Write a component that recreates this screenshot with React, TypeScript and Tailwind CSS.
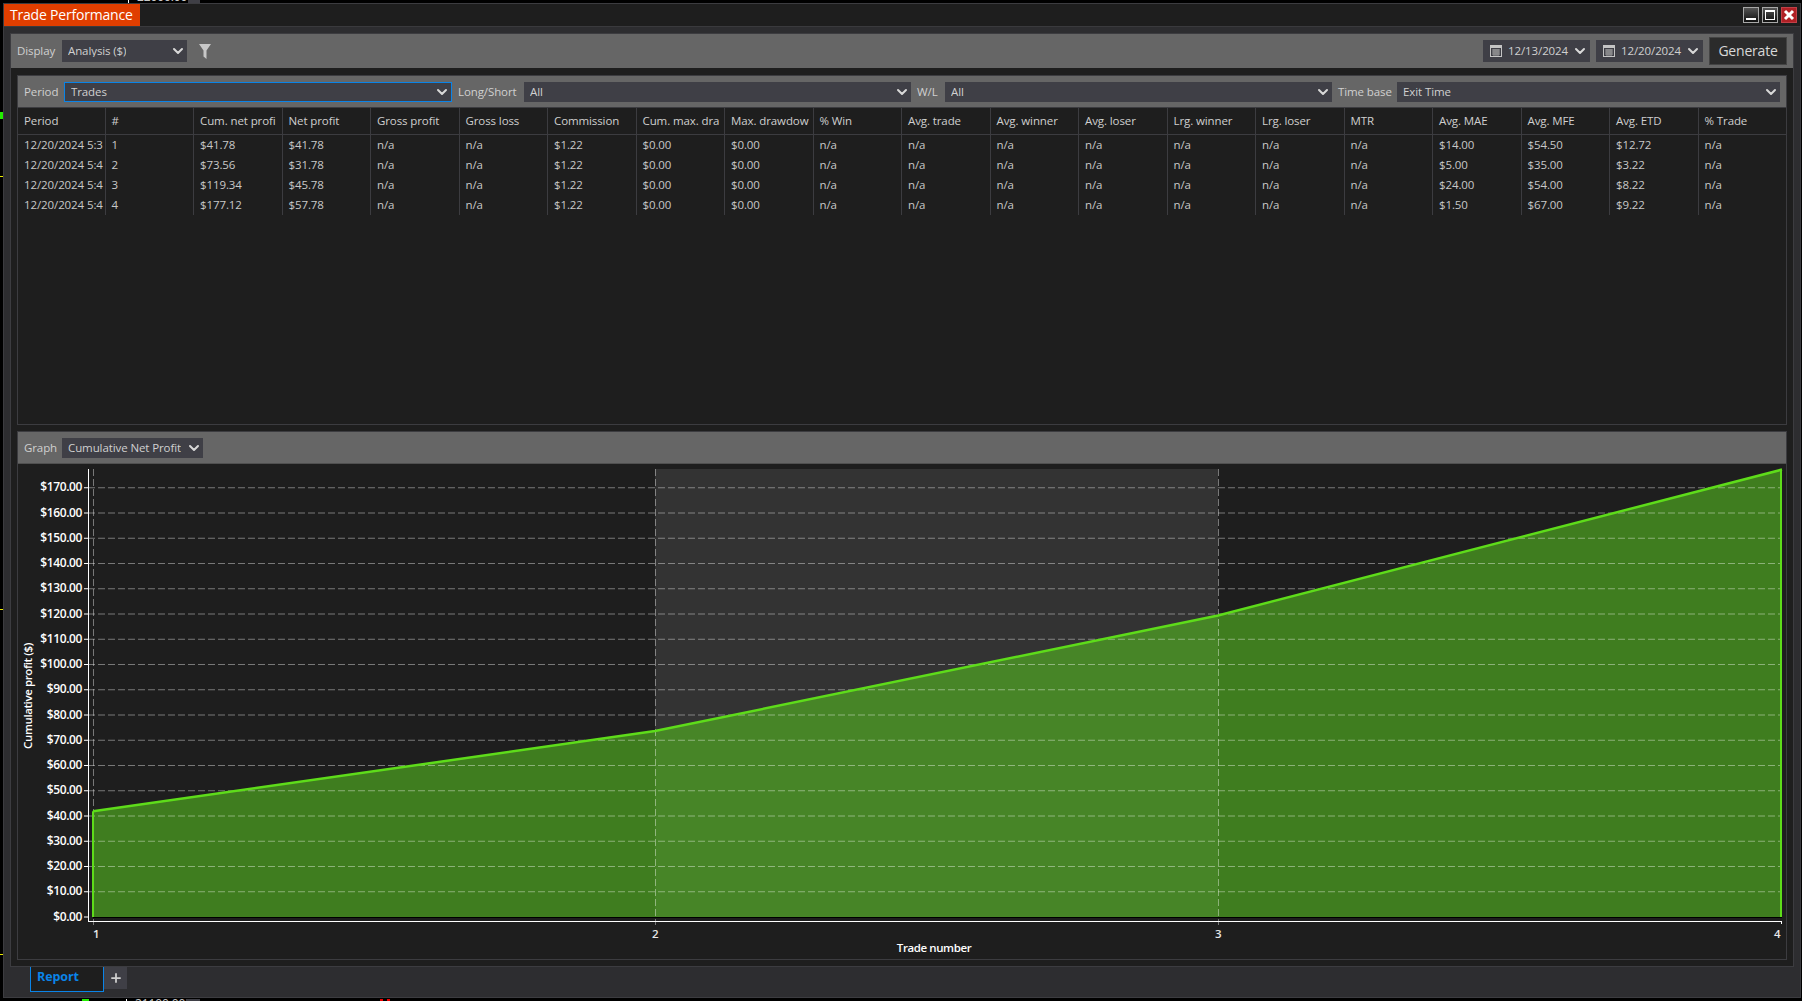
import { ChevronDown, Plus } from 'lucide-react'

const font = "font-['Open_Sans','Noto_Sans',sans-serif]"

const columns = ['Period', '#', 'Cum. net profi', 'Net profit', 'Gross profit', 'Gross loss', 'Commission', 'Cum. max. dra', 'Max. drawdow', '% Win', 'Avg. trade', 'Avg. winner', 'Avg. loser', 'Lrg. winner', 'Lrg. loser', 'MTR', 'Avg. MAE', 'Avg. MFE', 'Avg. ETD', '% Trade']

const rows = [
  ['12/20/2024 5:3', '1', '$41.78', '$41.78', 'n/a', 'n/a', '$1.22', '$0.00', '$0.00', 'n/a', 'n/a', 'n/a', 'n/a', 'n/a', 'n/a', 'n/a', '$14.00', '$54.50', '$12.72', 'n/a'],
  ['12/20/2024 5:4', '2', '$73.56', '$31.78', 'n/a', 'n/a', '$1.22', '$0.00', '$0.00', 'n/a', 'n/a', 'n/a', 'n/a', 'n/a', 'n/a', 'n/a', '$5.00', '$35.00', '$3.22', 'n/a'],
  ['12/20/2024 5:4', '3', '$119.34', '$45.78', 'n/a', 'n/a', '$1.22', '$0.00', '$0.00', 'n/a', 'n/a', 'n/a', 'n/a', 'n/a', 'n/a', 'n/a', '$24.00', '$54.00', '$8.22', 'n/a'],
  ['12/20/2024 5:4', '4', '$177.12', '$57.78', 'n/a', 'n/a', '$1.22', '$0.00', '$0.00', 'n/a', 'n/a', 'n/a', 'n/a', 'n/a', 'n/a', 'n/a', '$1.50', '$67.00', '$9.22', 'n/a'],
]

// chart scale, in page pixels
const xs = [93, 655, 1218, 1782]
const values = [41.78, 73.56, 119.34, 177.12]
const yOf = (v: number) => 916.8 - v * 2.525
const ticks = Array.from({ length: 18 }, (_, i) => i * 10)

function Select({ label, className }: { label: string; className: string }) {
  return (
    <div className={`flex items-center justify-between bg-[#3f3f46] pl-[6px] pr-[1px] text-[#d0d0d0] ${className}`}>
      <span className="truncate">{label}</span>
      <ChevronDown size={16} strokeWidth={3} className="shrink-0 text-[#d8d8d8]" />
    </div>
  )
}

function CalendarIcon() {
  return (
    <svg width="12" height="12" viewBox="0 0 12 12" className="shrink-0">
      <rect x="0.5" y="0.5" width="11" height="11" fill="none" stroke="#c4c4c4" />
      <rect x="1" y="1" width="10" height="2" fill="#c4c4c4" />
      <path d="M2 5h8M2 7h8M2 9h8M4 4v7M6 4v7M8 4v7" stroke="#a0a0a0" strokeWidth="1" />
    </svg>
  )
}

function DatePick({ value }: { value: string }) {
  return (
    <div className="flex h-[22px] w-[107px] items-center bg-[#3f3f46] pl-[7px] pr-[2px] text-[#d0d0d0]">
      <CalendarIcon />
      <span className="ml-[6px] flex-1">{value}</span>
      <ChevronDown size={16} strokeWidth={3} className="text-[#d8d8d8]" />
    </div>
  )
}

function WinButton({ children, close }: { children: React.ReactNode; close?: boolean }) {
  return (
    <div className={`flex h-[16px] w-[16px] items-center justify-center border ${close ? 'border-[#c04048] bg-[#b02025]' : 'border-[#a8a8a8] bg-gradient-to-b from-[#555] to-[#111]'}`}>
      {children}
    </div>
  )
}

function Chart() {
  const line = xs.map((x, i) => `${x},${yOf(values[i])}`).join(' ')
  const axisFont = { fontFamily: "'Open Sans', sans-serif", fontSize: 11.5, fontWeight: 600, letterSpacing: -0.4 }
  const tickFont = { ...axisFont, fontSize: 12 }
  return (
    <svg viewBox="18 464 1768 494" width="1768" height="494" className="block">
      <rect x={xs[1]} y={469} width={xs[2] - xs[1]} height={448} fill="#333333" />
      <polygon points={`${xs[0]},917 ${line} ${xs[3]},917`} fill="rgba(85,188,32,0.6)" />
      {ticks.slice(1).map((v) => (
        <line key={v} x1={88} x2={1782} y1={yOf(v) + 0.2} y2={yOf(v) + 0.2} stroke="rgba(255,255,255,0.4)" strokeDasharray="7 3" />
      ))}
      {xs.slice(0, 3).map((x) => (
        <line key={x} x1={x + 0.5} x2={x + 0.5} y1={469} y2={925} stroke="rgba(255,255,255,0.4)" strokeDasharray="7 3" />
      ))}
      <polyline points={line} fill="none" stroke="#5edc1a" strokeWidth="2.5" />
      <line x1={93} x2={93} y1={yOf(values[0])} y2={917} stroke="#5edc1a" strokeWidth="2" />
      <line x1={1781} x2={1781} y1={yOf(values[3])} y2={917} stroke="#5edc1a" strokeWidth="2" />
      <line x1={93} x2={1782} y1={917.5} y2={917.5} stroke="#000" />
      <line x1={88.5} x2={88.5} y1={469} y2={921} stroke="#fff" />
      <line x1={88} x2={1782} y1={921.5} y2={921.5} stroke="#fff" />
      <line x1={1781.5} x2={1781.5} y1={921} y2={924} stroke="#fff" />
      {ticks.map((v) => (
        <g key={v}>
          <line x1={84} x2={88} y1={yOf(v) + 0.2} y2={yOf(v) + 0.2} stroke="#fff" />
          <text x={82} y={yOf(v) + 3.8} textAnchor="end" fill="#fff" style={tickFont}>{`$${v}.00`}</text>
        </g>
      ))}
      <text x={96} y={938} textAnchor="middle" fill="#e8e8e8" style={axisFont}>1</text>
      <text x={655} y={938} textAnchor="middle" fill="#e8e8e8" style={axisFont}>2</text>
      <text x={1218} y={938} textAnchor="middle" fill="#e8e8e8" style={axisFont}>3</text>
      <text x={1777} y={938} textAnchor="middle" fill="#e8e8e8" style={axisFont}>4</text>
      <text x={934} y={952} textAnchor="middle" fill="#fff" style={axisFont}>Trade number</text>
      <text transform="translate(32 696) rotate(-90)" textAnchor="middle" fill="#fff" style={axisFont}>Cumulative profit ($)</text>
    </svg>
  )
}

export default function App() {
  return (
    <div className={`relative h-[1001px] w-[1802px] overflow-hidden whitespace-nowrap bg-black pb-[3px] pl-[3px] pr-[1px] pt-[3px] text-[11.5px] leading-none tracking-[-0.1px] ${font}`}>
      {/* bits of the chart window behind this one */}
      <span className="absolute left-[137px] top-[-9px] text-[12px] text-[#c8c8c8]">22000.00</span>
      <span className="absolute left-[128px] top-0 h-[3px] w-px bg-white" />
      <span className="absolute left-[188px] top-0 h-[3px] w-[12px] bg-[#3f3f46]" />
      <span className="absolute left-0 top-[112px] h-[7px] w-[3px] bg-[#22ee00]" />
      <span className="absolute left-0 top-[176px] h-px w-[3px] bg-[#eeee00]" />
      <span className="absolute left-0 top-[609px] h-px w-[3px] bg-[#eeee00]" />
      <span className="absolute left-0 top-[954px] h-px w-[3px] bg-[#eeee00]" />
      <span className="absolute left-[82px] top-[999px] h-[2px] w-[7px] bg-[#22ee00]" />
      <span className="absolute left-[126px] top-[999px] h-[2px] w-px bg-white" />
      <span className="absolute left-[135px] top-[998px] text-[12px] text-[#c8c8c8]">21100.00</span>
      <span className="absolute left-[186px] top-[999px] h-[2px] w-[14px] bg-[#3f3f46]" />
      <span className="absolute left-[380px] top-[999px] h-[2px] w-[3px] bg-[#ee0000]" />
      <span className="absolute left-[387px] top-[999px] h-[2px] w-[3px] bg-[#ee0000]" />

      <div className="relative flex h-full flex-col border border-[#3c3c40] bg-[#2d2d30]">
        {/* title bar */}
        <div className="flex h-[23px] shrink-0 items-start justify-between border-b border-[#3a3a3d] bg-[#1e1e1e]">
          <div className="flex h-[22px] w-[136px] items-center bg-[#e03e00] pl-[6px] text-[14px] tracking-[-0.2px] text-white">Trade Performance</div>
          <div className="mr-[3px] mt-[3px] flex gap-[3px]">
            <WinButton><span className="mt-[8px] block h-[2px] w-[10px] bg-white" /></WinButton>
            <WinButton><span className="block h-[10px] w-[10px] border border-t-2 border-white" /></WinButton>
            <WinButton close>
              <svg width="12" height="12" viewBox="0 0 12 12">
                <path d="M2 2l8 8M10 2l-8 8" stroke="#fff" strokeWidth="3" />
              </svg>
            </WinButton>
          </div>
        </div>

        <div className="ml-[6px] mr-[6px] mt-[6px] flex h-[934px] shrink-0 flex-col border border-[#3c3c40] bg-[#1e1e1e]">
          {/* toolbar */}
          <div className="flex h-[34px] shrink-0 items-center bg-[#666666] pl-[6px] pr-[6px] text-[#d0d0d0]">
            <span className="w-[45px]">Display</span>
            <Select label="Analysis ($)" className="h-[22px] w-[125px]" />
            <svg width="12" height="15" viewBox="0 0 12 15" className="ml-[12px]">
              <path d="M0 0h12L7.500 6.500V15L4.500 12.500V6.500Z" fill="#c8c8c8" />
            </svg>
            <div className="ml-auto flex items-center gap-[6px]">
              <DatePick value="12/13/2024" />
              <DatePick value="12/20/2024" />
              <div className="flex h-[28px] w-[78px] items-center justify-center border border-[#444] bg-[#2b2b2b] text-[14px] tracking-[-0.2px] text-[#d8d8d8]">Generate</div>
            </div>
          </div>

          {/* report grid */}
          <div className="mx-[6px] mt-[7px] flex h-[350px] shrink-0 flex-col overflow-hidden border border-[#3c3c40]">
            <div className="flex h-[32px] shrink-0 items-center gap-[6px] border-b border-[#3c3c40] bg-[#666666] pl-[6px] pr-[6px] text-[#d0d0d0]">
              <span className="w-[34px]">Period</span>
              <Select label="Trades" className="h-[20px] w-[388px] border border-[#0a84e8]" />
              <span className="w-[60px]">Long/Short</span>
              <Select label="All" className="h-[20px] w-[387px]" />
              <span className="w-[22px]">W/L</span>
              <Select label="All" className="h-[20px] w-[387px]" />
              <span className="w-[53px]">Time base</span>
              <Select label="Exit Time" className="h-[20px] flex-1" />
            </div>
            <div className="-mx-[1px] grid h-[27px] shrink-0 grid-cols-[repeat(20,minmax(0,1fr))] border-b border-[#3c3c40] text-[#cfcfcf]">
              {columns.map((c) => (
                <div key={c} className="flex items-center overflow-hidden border-r border-[#3c3c40] pl-[6px] first:pl-[7px] last:border-r-0">{c}</div>
              ))}
            </div>
            <div className="-mx-[1px] text-[#c8c8c8]">
              {rows.map((row) => (
                <div key={row[1]} className="grid h-[20px] grid-cols-[repeat(20,minmax(0,1fr))]">
                  {row.map((cell, i) => (
                    <div key={i} className="flex items-center overflow-hidden border-r border-[#3c3c40] pl-[6px] first:pl-[7px] last:border-r-0">{cell}</div>
                  ))}
                </div>
              ))}
            </div>
          </div>

          {/* graph */}
          <div className="mx-[6px] mt-[6px] flex h-[529px] shrink-0 flex-col border border-[#3c3c40]">
            <div className="flex h-[32px] shrink-0 items-center border-b border-[#505050] bg-[#666666] pl-[6px] text-[#d0d0d0]">
              <span className="w-[38px]">Graph</span>
              <Select label="Cumulative Net Profit" className="h-[20px] w-[141px]" />
            </div>
            <Chart />
          </div>
        </div>

        {/* tabs */}
        <div className="ml-[26px] flex items-start">
          <div className="flex h-[25px] w-[74px] items-center border border-t-0 border-[#0a84e8] bg-[#1e1e1e] pb-[3px] pl-[6px] text-[12.5px] font-bold text-[#0a84e8]">Report</div>
          <div className="flex h-[22px] w-[23px] items-center justify-center bg-[#3f3f46] text-[#d0d0d0]">
            <Plus size={14} strokeWidth={3} />
          </div>
        </div>
      </div>
    </div>
  )
}
